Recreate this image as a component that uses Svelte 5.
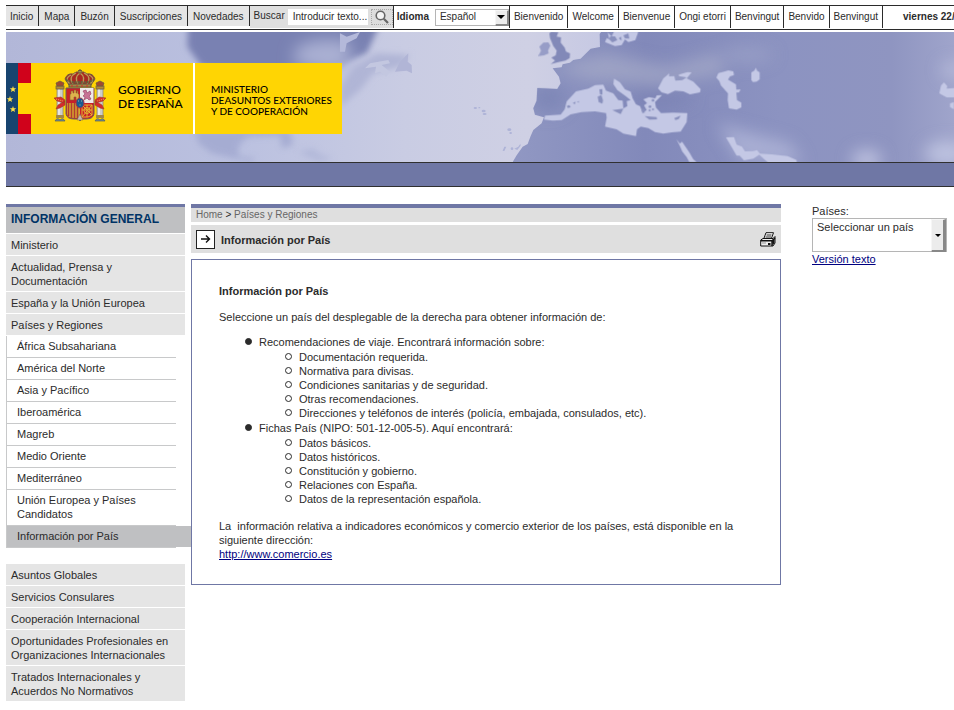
<script lang="ts">
	type Entry = { label: string; active?: boolean };

	const siteLinks = ['Inicio', 'Mapa', 'Buzón', 'Suscripciones', 'Novedades'];
	const greetings = ['Bienvenido', 'Welcome', 'Bienvenue', 'Ongi etorri', 'Benvingut', 'Benvido', 'Benvingut'];

	const topSections = ['Ministerio', 'Actualidad, Prensa y Documentación', 'España y la Unión Europea', 'Países y Regiones'];
	const regions: Entry[] = [
		{ label: 'África Subsahariana' },
		{ label: 'América del Norte' },
		{ label: 'Asia y Pacífico' },
		{ label: 'Iberoamérica' },
		{ label: 'Magreb' },
		{ label: 'Medio Oriente' },
		{ label: 'Mediterráneo' },
		{ label: 'Unión Europea y Países Candidatos' },
		{ label: 'Información por País', active: true }
	];
	const bottomSections = [
		'Asuntos Globales',
		'Servicios Consulares',
		'Cooperación Internacional',
		'Oportunidades Profesionales en Organizaciones Internacionales',
		'Tratados Internacionales y Acuerdos No Normativos'
	];

	const contents = [
		{
			title: 'Recomendaciones de viaje. Encontrará información sobre:',
			items: [
				'Documentación requerida.',
				'Normativa para divisas.',
				'Condiciones sanitarias y de seguridad.',
				'Otras recomendaciones.',
				'Direcciones y teléfonos de interés (policía, embajada, consulados, etc).'
			]
		},
		{
			title: 'Fichas País (NIPO: 501-12-005-5). Aquí encontrará:',
			items: [
				'Datos básicos.',
				'Datos históricos.',
				'Constitución y gobierno.',
				'Relaciones con España.',
				'Datos de la representación española.'
			]
		}
	];

	let query = $state('Introducir texto...');
	let language = $state('Español');
	let country = $state('Seleccionar un país');
</script>

<div class="page">
	<div class="topbar">
		{#each siteLinks as link (link)}
			<a class="cell grey" href="#top">{link}</a>
		{/each}
		<form class="cell search" onsubmit={(e) => e.preventDefault()}>
			<label for="q">Buscar</label>
			<input id="q" type="text" bind:value={query} />
			<button type="submit" aria-label="Buscar">
				<svg viewBox="0 0 14 14" width="14" height="14" aria-hidden="true">
					<circle cx="5.5" cy="5.5" r="4.3" fill="#f4f4f4" stroke="#666" stroke-width="1.6" />
					<path d="M8.8 8.8 L13 13" stroke="#666" stroke-width="2.2" />
				</svg>
			</button>
		</form>
		<div class="cell language">
			<label for="lang">Idioma</label>
			<span class="picker">
				<select id="lang" bind:value={language}>
					<option>Español</option>
				</select>
				<span class="arrow" aria-hidden="true"></span>
			</span>
		</div>
		{#each greetings as word, i (i)}
			<a class="cell" href="#top">{word}</a>
		{/each}
		<span class="date">viernes 22/</span>
	</div>

	<header class="banner">
		<svg class="map" viewBox="0 0 948 130" preserveAspectRatio="xMinYMin slice" aria-hidden="true">
			<defs>
				<linearGradient id="sea" gradientUnits="userSpaceOnUse" x1="0" x2="948" y1="0" y2="0">
					<stop offset="0" stop-color="#b2b7d8" />
					<stop offset="0.25" stop-color="#bbc1e0" />
					<stop offset="0.42" stop-color="#c9cce3" />
					<stop offset="0.55" stop-color="#cfd0e4" />
					<stop offset="0.65" stop-color="#c4c7e3" />
					<stop offset="1" stop-color="#c4c8e6" />
				</linearGradient>
				<linearGradient id="land" x1="0" x2="1" y1="0" y2="0">
					<stop offset="0" stop-color="#9198c3" />
					<stop offset="0.3" stop-color="#8289ba" />
					<stop offset="0.6" stop-color="#8c93c1" />
					<stop offset="0.85" stop-color="#8f95c1" />
					<stop offset="1" stop-color="#a1a6cc" />
				</linearGradient>
				<filter id="soft" filterUnits="userSpaceOnUse" x="-200" y="-200" width="2400" height="900"><feGaussianBlur stdDeviation="24" /></filter>
				<filter id="edge" filterUnits="userSpaceOnUse" x="-200" y="-200" width="2400" height="900"><feGaussianBlur stdDeviation="10" /></filter>
				<clipPath id="landClip">
					<path d="M518 396 L530 376 L548 350 L563 342 L572 318 L580 300 L605 280 L612 262 L585 254 L580 235 L590 212 L592 174 L652 177 L662 160 L657 140 L638 115 L665 112 L668 103 L690 98 L700 90 L722 86 L740 68 L752 56 L780 51 L779 12 L788 0 H1860 V400 H518 Z" />
				</clipPath>
			</defs>
			<rect width="948" height="130" fill="url(#sea)" />

			<!-- North America -->
			<g transform="translate(-6 -2) scale(.3333)">
				<path d="M565 -40 L562 50 L605 110 L760 130 L1000 110 L1100 70 L1150 -40 Z" fill="#7981b2" filter="url(#edge)" />
				<path d="M880 100 L890 50 L950 30 L1040 30 L1060 90 L1000 130 Z" fill="#aab0d3" filter="url(#soft)" />
				<path d="M1020 170 L1060 110 L1130 70 L1230 75 L1200 110 L1120 130 L1080 180 L1020 230 Z" fill="#b0b5d6" filter="url(#edge)" />
				<path d="M585 300 H870 L880 345 L845 355 L840 318 L745 320 Q700 350 720 380 L765 385 L755 396 L700 385 L635 370 L595 340 Z" fill="#9da4cd" filter="url(#edge)" opacity=".7" />
				<path d="M895 365 L940 355 L960 372 L1000 385 L960 396 L920 380 Z" fill="#a6add2" opacity=".5" filter="url(#edge)" />
				<path d="M1020 10 L1040 20 L1080 6 L1070 25 L1040 40 L1035 65 L1020 65 Z" fill="#b4b9da" />
			</g>

			<g transform="translate(334 -2) scale(.3333)">
				<!-- Newfoundland, gulf islands and the Atlantic archipelagos -->
				<path d="M165 125 L180 95 L205 70 L203 95 L215 105 L216 130 L200 122 Z" fill="#b1b5d6" />
				<path d="M75 115 L90 100 L145 90 L150 100 L125 105 L150 125 L138 140 L120 125 L105 130 L108 110 Z" fill="#c3c7e0" />
				<g fill="#aeb3d7">
					<ellipse cx="406" cy="234" rx="5" ry="3" /><ellipse cx="418" cy="233" rx="3" ry="2" />
					<ellipse cx="431" cy="243" rx="6" ry="4" /><ellipse cx="434" cy="252" rx="6" ry="3" />
					<ellipse cx="508" cy="299" rx="6" ry="4" /><ellipse cx="512" cy="309" rx="4" ry="3" />
					<path d="M488 362 L493 350 L499 350 L493 363 Z" /><circle cx="516" cy="356" r="4" /><path d="M523 356 L535 350 L541 341 L542 347 L532 360 Z" />
				</g>

				<g clip-path="url(#landClip)">
					<rect x="510" width="1350" height="400" fill="url(#land)" />
					<g filter="url(#soft)">
						<path d="M650 110 L800 70 L980 110 L1130 70 L1160 130 L950 165 L740 150 Z" fill="#a9adca" opacity=".65" />
						<ellipse cx="1220" cy="75" rx="80" ry="25" fill="#a4a9cb" opacity=".5" />
						<ellipse cx="970" cy="205" rx="90" ry="20" fill="#777fb0" opacity=".6" />
						<ellipse cx="625" cy="205" rx="55" ry="45" fill="#7981b3" opacity=".7" />
						<path d="M1130 280 L1240 310 L1350 340 L1390 400 L1200 390 Z" fill="#b0b5d8" opacity=".8" />
						<ellipse cx="1580" cy="390" rx="45" ry="30" fill="#bdc1df" />
						<ellipse cx="1820" cy="370" rx="65" ry="35" fill="#bec3e0" />
						<ellipse cx="1840" cy="120" rx="35" ry="22" fill="#b7bbda" />
					</g>
				</g>

				<!-- British Isles -->
				<path d="M595 78 L603 62 L598 50 L610 38 L625 37 L631 47 L624 62 L626 70 L612 76 Z" fill="#979dc7" />
				<path d="M632 102 L645 92 L634 83 L647 76 L650 62 L640 48 L635 36 L630 24 L628 10 L634 5 L655 6 L650 20 L663 22 L662 38 L674 53 L678 65 L690 70 L689 84 L676 92 L655 96 Z" fill="#8289b8" />

				<g fill="#c4c8e5">
					<!-- Baltic -->
					<path d="M795 36 L800 24 L808 28 L803 7 L815 20 L822 4 L895 5 L886 30 L865 36 L855 28 L845 45 L825 48 Z" />
					<!-- Mediterranean, Adriatic and Aegean -->
					<path d="M612 269 L615 257 L662 254 L674 238 L680 214 L708 184 L745 176 L765 165 L790 164 L798 182 L820 190 L835 210 L848 212 L850 235 L862 228 L860 213 L872 210 L855 197 L832 180 L820 162 L822 146 L840 157 L855 178 L872 185 L878 205 L888 223 L900 228 L908 247 L920 240 L912 226 L921 219 L910 208 L927 201 L946 205 L950 196 L966 195 L945 216 L948 233 L963 249 L1000 248 L1042 249 L1040 276 L1022 305 L995 307 L970 311 L945 306 L925 294 L902 290 L891 298 L888 318 L850 311 L830 298 L795 290 L800 263 L798 249 L765 244 L725 246 L692 253 L665 270 L638 272 Z" />
					<!-- Black Sea -->
					<path d="M954 175 L970 145 L988 130 L987 139 L1003 138 L1006 152 L1027 150 L1040 142 L1017 138 L1016 134 L1042 126 L1055 127 L1040 145 L1060 155 L1082 177 L1080 187 L1050 193 L1030 184 L1005 182 L984 192 L965 187 Z" />
					<!-- Caspian and Aral -->
					<path d="M1129 143 L1135 129 L1155 124 L1165 121 L1180 124 L1182 135 L1170 139 L1164 149 L1188 163 L1189 179 L1202 178 L1197 187 L1189 188 L1191 210 L1204 218 L1204 232 L1190 239 L1167 235 L1163 210 L1164 190 L1143 167 L1138 153 Z" />
					<path d="M1234 150 L1234 127 L1243 122 L1248 113 L1251 122 L1259 127 L1259 148 L1250 155 L1239 156 Z" />
					<!-- Red Sea and Gulf -->
					<path d="M1009 327 L1020 341 L1026 335 L1048 367 L1060 388 L1070 396 H1048 L1040 381 L1027 365 L1019 347 Z" />
					<path d="M1158 322 L1182 321 L1190 344 L1206 350 L1215 364 L1240 363 L1251 360 L1260 371 L1295 373 L1343 378 L1370 390 V398 H1285 L1273 388 L1258 374 L1240 386 L1212 391 L1199 377 L1190 377 Z" />
					<path d="M1798 190 L1803 167 L1812 157 L1822 168 L1820 176 L1860 173 V202 H1820 Z M1830 220 L1842 216 V238 L1830 231 Z" />
				</g>

				<!-- islands -->
				<g fill="#8990bd">
					<path d="M778 178 L787 177 L787 194 L780 193 Z M773 200 L784 195 L789 211 L787 221 L776 216 Z" />
					<path d="M817 240 L850 236 L842 252 Z M680 228 L688 225 L692 231 L684 234 Z M698 219 L707 215 L705 222 Z M711 215 L717 213 L716 218 Z" />
					<path d="M914 258 L950 261 L951 268 L928 269 Z M1003 264 L1022 257 L1016 267 L1006 270 Z" />
					<path d="M903 235 L915 237 L914 248 L907 249 Z" />
					<circle cx="930" cy="230" r="4" /><circle cx="929" cy="241" r="3" /><circle cx="939" cy="211" r="4" /><circle cx="939" cy="238" r="3" />
					<path d="M811 19 L825 19 L832 30 L817 37 L807 27 Z M836 25 L843 20 L845 32 Z M850 16 L865 10 L868 26 L855 25 Z" />
				</g>
			</g>
		</svg>

		<div class="logo">
			<svg class="flag" viewBox="0 0 25 71" width="25" height="71" aria-hidden="true">
				<rect width="12" height="71" fill="#18446f" />
				<rect x="12" width="13" height="20" fill="#d0021b" />
				<rect x="12" y="51" width="13" height="20" fill="#d0021b" />
				<path id="star" d="M7 23 L7.8 25.2 L10.2 25.3 L8.4 26.8 L9 29.1 L7 27.8 L5 29.1 L5.6 26.8 L3.8 25.3 L6.2 25.2 Z" fill="#ffe147" />
				<use href="#star" x="-3" y="10" />
				<use href="#star" y="20" />
			</svg>

			<svg class="arms" viewBox="0 0 52 54" width="52" height="54" role="img" aria-label="Escudo de España">
				<!-- crown -->
				<path d="M15 16 L11 10 Q13 4 19 5 Q22 2 26 3 Q30 2 33 5 Q39 4 41 10 L37 16 Z" fill="#a82a21" stroke="#6d623e" stroke-width="1" />
				<path d="M16 15 Q10 9 17 6 M19 15 Q14 8 22 4 M24 15 Q20 8 26 4 Q32 8 28 15 M33 15 Q38 8 30 4 M36 15 Q42 9 35 6" fill="none" stroke="#b99d58" stroke-width="1.3" />
				<path d="M12 11 Q18 14 26 13 Q34 14 40 11" fill="none" stroke="#5e623e" stroke-width="2" stroke-dasharray="2 1" />
				<rect x="15" y="15" width="22" height="3" fill="#a78545" stroke="#5e5840" stroke-width="1" />
				<path d="M17 17 H36" stroke="#cf3029" stroke-width="1" stroke-dasharray="2 3" />
				<circle cx="26" cy="2.5" r="1.5" fill="#d1b051" stroke="#635c43" stroke-width=".7" />
				<path d="M26 0 V5 M24 1.5 H28" stroke="#665939" stroke-width=".8" />
				<!-- pillars -->
				{#each [3, 43] as x (x)}
					<rect {x} y="20" width="6" height="27" fill="#cecdca" stroke="#858178" stroke-width=".7" />
					<path d="M{x + 2} 20 V47" stroke="#fff" stroke-width="1" />
					<rect x={x - 1} y="17" width="8" height="3" fill="#b58a35" stroke="#665a44" stroke-width=".7" />
					<path d="M{x} 17 L{x - 1} 14 L{x + 3} 12 L{x + 7} 14 L{x + 6} 17 Z" fill="#a14a30" stroke="#665a44" stroke-width=".7" />
					<rect x={x - 1} y="46" width="8" height="3" fill="#a38745" />
					<path d="M{x - 2} 52 Q{x} 48 {x + 3} 51 Q{x + 6} 48 {x + 8} 52 Z" fill="#6d8b8c" stroke="#555f63" stroke-width=".7" />
				{/each}
				<path d="M0 29 L7 28 L11 31 L10 34 L3 32 Z M2 40 L4 36 L11 32 L11 36 L6 39 Z" fill="#d62b2e" stroke="#9e3c20" stroke-width=".6" />
				<path d="M52 29 L45 28 L41 31 L42 34 L49 32 Z M50 40 L48 36 L41 32 L41 36 L46 39 Z" fill="#d62b2e" stroke="#9e3c20" stroke-width=".6" />
				<path d="M2 30 L9 32 M50 30 L43 32" stroke="#e5b54c" stroke-width="1" stroke-dasharray="1 1" />
				<!-- quarters -->
				<path d="M12 19 H40 V45 Q39 50 32 50 H29 Q27 50 26 52 Q25 50 23 50 H20 Q13 50 12 45 Z" fill="#c91f29" stroke="#6b6258" stroke-width="1" />
				<rect x="26" y="19" width="13.5" height="15" fill="#eee9e9" />
				<path d="M16 31 V25 H17 V22 H19 V24 H20 V21 H22 V24 H23 V22 H24 V25 H25 V31 H22 V28 H20 V31 Z" fill="#deb34c" stroke="#86632c" stroke-width=".6" />
				<path d="M29 22 L32 21 L33 24 L36 22 L37 25 L35 27 L37 30 L35 31 L33 29 L30 31 L31 28 L29 27 L31 25 Z" fill="#c87295" stroke="#9c486b" stroke-width=".7" />
				<path d="M13 34 H26 V49 H20 Q14 49 13 45 Z" fill="#d8ab2f" />
				<path d="M14.5 34 V47 M17.5 34 V49 M20.5 34 V49 M23.5 34 V49" stroke="#b33c31" stroke-width="1.6" />
				<path d="M28 36 H38 V46 L34 48 H28 Z M28 36 L38 46 M38 36 L28 48 M33 36 V48 M28 41 H38" fill="none" stroke="#e3b531" stroke-width="1" />
				<circle cx="33" cy="41.5" r="3" fill="none" stroke="#e3b531" stroke-width="1" />
				<path d="M23 51 L26 45 L29 51 Z" fill="#c9bbaa" stroke="#746255" stroke-width=".5" />
				<ellipse cx="26" cy="34" rx="4" ry="5" fill="#195b91" stroke="#a73247" stroke-width="1" />
				<path d="M24 32 H25 M27 32 H28 M25.5 36 H26.5" stroke="#a8b5a0" stroke-width="1" />
			</svg>

			<p class="government">GOBIERNO<br />DE ESPAÑA</p>
			<p class="ministry">MINISTERIO<br />DEASUNTOS EXTERIORES<br />Y DE COOPERACIÓN</p>
		</div>
	</header>
	<div class="strip"></div>

	<div class="columns">
		<nav class="sidebar" aria-label="Información general">
			<h2>INFORMACIÓN GENERAL</h2>
			<ul>
				{#each topSections as label (label)}
					<li><a href="#section">{label}</a></li>
				{/each}
			</ul>
			<ul class="sub">
				{#each regions as region (region.label)}
					<li class:active={region.active}><a href="#region">{region.label}</a></li>
				{/each}
			</ul>
			<ul>
				{#each bottomSections as label (label)}
					<li><a href="#section">{label}</a></li>
				{/each}
			</ul>
		</nav>

		<main>
			<div class="crumbs"><a href="#home">Home</a> &gt; <a href="#regions">Países y Regiones</a></div>
			<div class="title">
				<svg viewBox="0 0 19 19" width="19" height="19" aria-hidden="true">
					<rect x=".5" y=".5" width="18" height="18" fill="#fff" stroke="#222" />
					<path d="M5 9 H13 M10 5.5 L13.5 9 L10 12.5" fill="none" stroke="#111" stroke-width="1.4" />
				</svg>
				<h1>Información por País</h1>
				<button type="button" aria-label="Imprimir">
					<svg viewBox="0 0 16 15" width="16" height="15" aria-hidden="true">
						<path d="M3.5 7.5 L6 .7 H13.5 L11 7.5" fill="#fff" stroke="#111" />
						<path d="M6.5 3 H11.5 M5.5 5 H11" stroke="#222" />
						<path d="M.7 8 L3 6.5 H13 L15 4.5 V11 L13 14 H.7 Z" fill="#eee" stroke="#111" />
						<path d="M1 8.7 H12 V14 M12 8.7 L15 6" fill="none" stroke="#111" stroke-width="1.4" />
						<path d="M8 11 H10.5 V13 H8 Z M12 9 L14.5 6.5 V11 L12.5 13.5 Z" fill="#111" />
						<path d="M2 11 H6" stroke="#999" />
					</svg>
				</button>
			</div>

			<article>
				<h3>Información por País</h3>
				<p>Seleccione un país del desplegable de la derecha para obtener información de:</p>
				<ul>
					{#each contents as group (group.title)}
						<li>
							{group.title}
							<ul>
								{#each group.items as item (item)}
									<li>{item}</li>
								{/each}
							</ul>
						</li>
					{/each}
				</ul>
				<p>
					La&nbsp; información relativa a indicadores económicos y comercio exterior de los países, está disponible en la siguiente dirección:<br />
					<a href="http://www.comercio.es">http://www.comercio.es</a>
				</p>
			</article>
		</main>

		<aside>
			<label for="country">Países:</label>
			<span class="picker tall">
				<select id="country" bind:value={country}>
					<option>Seleccionar un país</option>
				</select>
				<span class="arrow" aria-hidden="true"></span>
			</span>
			<a href="#text">Versión texto</a>
		</aside>
	</div>
</div>

<style>
	:global(body) { margin: 0; background: #fff; }

	.page {
		padding: 5px 0 8px 6px;
		overflow: hidden;
		color: #2b2b2b;
		font: 11px/14px "Liberation Sans", Arial, sans-serif;
	}
	h1, h2, h3, p, ul { margin: 0; padding: 0; }
	ul { list-style: none; }
	a { color: inherit; text-decoration: none; }
	input, select, button {
		box-sizing: border-box;
		margin: 0;
		padding: 0;
		border: 0;
		border-radius: 0;
		color: inherit;
		font: inherit;
	}

	/* top bar */
	.topbar {
		display: flex;
		align-items: flex-start;
		height: 23px;
		border-top: 1px solid #2b2b2b;
		border-bottom: 1px solid #2b2b2b;
		font-size: 10px;
		line-height: 22px;
		white-space: nowrap;
		overflow: hidden;
	}
	.cell {
		flex: none;
		height: 22px;
		padding: 0 4px;
		border-right: 1px solid #2b2b2b;
	}
	.cell.grey { height: 20px; padding: 0 5px 0 4px; background: #e5e5e5; line-height: 21px; }
	.cell.grey:not(:first-child) { padding-left: 5px; }
	.search {
		display: flex;
		align-items: center;
		gap: 3px;
		padding: 0 0 0 4px;
		background: #dfdfdf;
		line-height: 20px;
	}
	.search label { height: 22px; }
	.search input { width: 80px; height: 16px; padding-left: 5px; background: #fff; }
	.search button {
		display: grid;
		place-items: center;
		width: 22px;
		height: 16px;
		border: 1px dotted #aaa;
		background: #ddd;
	}
	.language { display: flex; align-items: center; gap: 6px; padding: 0; }
	.language label { padding-left: 3px; font-weight: bold; }
	.date { flex: none; padding-left: 20px; font-weight: bold; }

	.picker { position: relative; display: block; }
	.picker select {
		display: block;
		width: 74px;
		height: 17px;
		padding-left: 4px;
		border: 1px solid #b5b5b5;
		background: #fff;
		line-height: 14px;
		appearance: none;
	}
	.arrow {
		position: absolute;
		top: 1px;
		right: 0;
		bottom: 0;
		width: 11px;
		display: grid;
		place-items: center;
		border: solid;
		border-width: 1px 2px 2px 1px;
		border-color: #f6f6f6 #888 #888 #f6f6f6;
		background: #ececec;
		pointer-events: none;
	}
	.arrow::after {
		content: '';
		border: 4px solid transparent;
		border-top-color: #000;
		border-bottom: 0;
	}

	/* banner */
	.banner {
		position: relative;
		display: flex;
		align-items: flex-end;
		height: 130px;
		margin-top: 2px;
	}
	.map { position: absolute; inset: 0; width: 100%; height: 100%; }
	.logo {
		position: relative;
		display: flex;
		align-items: stretch;
		width: 336px;
		height: 71px;
		margin-bottom: 28px;
		background: #ffd503;
		color: #000;
		font-family: Lato, sans-serif;
		font-weight: 500;
	}
	.logo svg { flex: none; }
	.arms { margin: 6px 0 0 23px; }
	.government {
		width: 75px;
		padding: 20px 0 0 12px;
		border-right: 2px solid #fff;
		font-size: 12px;
	}
	.ministry { padding: 21px 0 0 16px; font-size: 10px; line-height: 11px; white-space: nowrap; }
	.strip {
		height: 23px;
		border-top: 1px solid #303030;
		border-bottom: 1px solid #303030;
		background: #6f77a5;
	}

	/* columns */
	.columns {
		display: flex;
		align-items: flex-start;
		margin-top: 17px;
		padding-right: 7px;
	}
	.sidebar { flex: none; width: 179px; margin-right: 6px; }
	.sidebar h2 {
		padding: 5px 5px 7px;
		border-top: 3px solid #6f77a5;
		border-bottom: 1px solid #fff;
		background: #bfc0c2;
		color: #003366;
		font-size: 12px;
		line-height: 14px;
	}
	.sidebar a { display: block; padding: 4px 5px 3px; }
	.sidebar li { border-bottom: 1px solid #fff; background: #e5e5e5; }
	.sidebar .sub { margin-bottom: 16px; border-left: 1px solid #c8c9ca; }
	.sidebar .sub li { margin-right: 9px; border-color: #c8c9ca; background: none; }
	.sidebar .sub a { padding: 3px 5px 4px 10px; }
	.sidebar .sub .active a { margin-right: -15px; background: #bfc0c2; }

	main { flex: 1; min-width: 0; margin-right: 31px; }
	.crumbs {
		padding-left: 5px;
		border-top: 4px solid #6f77a5;
		background: #dfdfdf;
		font-size: 10px;
	}
	.crumbs a { color: #666; }
	.title {
		display: flex;
		align-items: center;
		height: 28px;
		margin: 3px 0 6px;
		padding: 0 5px;
		background: #dfdfdf;
	}
	.title svg { display: block; }
	.title h1 { flex: 1; padding: 2px 0 0 6px; font-size: 11px; }
	.title button { background: none; }

	article { padding: 24px 27px 23px; border: 1px solid #6f77a5; }
	article h3 { margin-bottom: 12px; font-size: 11px; }
	article p + ul { margin: 11px 0 12px; }
	article li { padding-left: 40px; }
	article li ul { padding: 1px 0; }
	article li::before {
		content: '';
		display: inline-block;
		box-sizing: border-box;
		width: 7px;
		height: 7px;
		margin: 0 7px 1px -14px;
		border: 1px solid #2b2b2b;
		border-radius: 50%;
		background: #2b2b2b;
	}
	article li li::before { background: none; }
	article a, aside a { color: #000080; text-decoration: underline; }

	aside { flex: none; width: 135px; }
	aside label { display: block; }
	.tall select {
		width: 100%;
		height: 34px;
		padding: 0 18px 16px 4px;
	}
	.tall .arrow { right: 1px; width: 11px; border-width: 1px 3px 2px 1px; }
	.tall .arrow::after { border-width: 3px 3px 0; }
	aside a { display: inline-block; }
</style>
